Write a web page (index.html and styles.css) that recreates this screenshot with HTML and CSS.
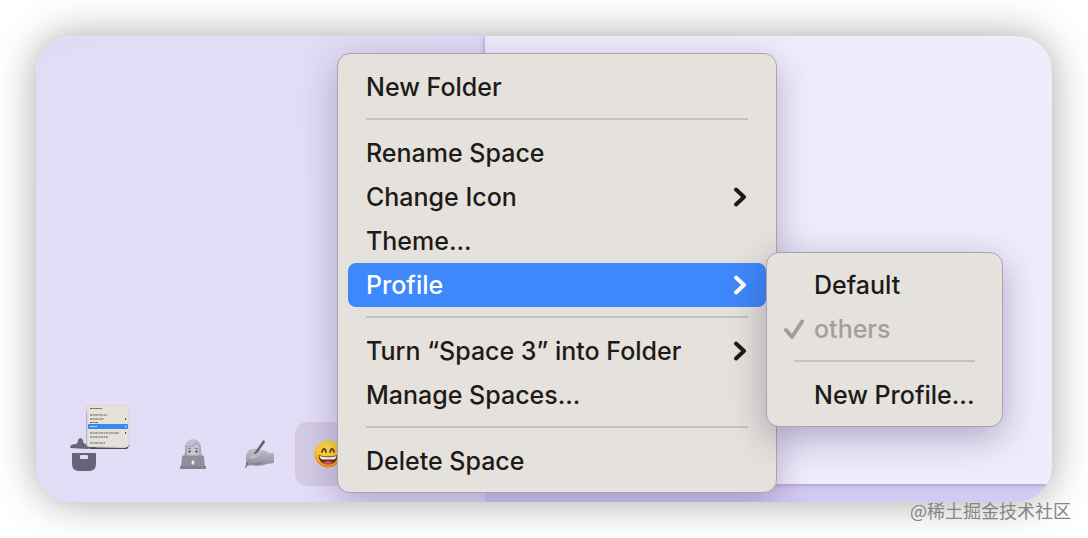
FILE: index.html
```
<!DOCTYPE html>
<html lang="en">
<head>
<meta charset="utf-8">
<title>Space menu</title>
<link rel="stylesheet" href="styles.css">
</head>
<body>
<main class="window">
  <aside class="sidebar">
    <nav class="spaces" aria-label="Spaces">
      <button class="space archive" aria-label="Archive">
        <svg width="62" height="70" viewBox="0 0 62 70">
          <path d="M1 43q0-4 6-4q2-1 2-4q2-4 5 0q0 4 3 4h10v4l-9 1z" fill="#68637a"/>
          <path d="M3 48h24v11q0 7-7 7h-10q-7 0-7-7z" fill="#68637a"/>
          <rect x="11" y="50" width="8" height="4" rx="1" fill="#e3dcf7"/>
          <path d="M20 42l36 1 5-3-3 4H22z" fill="#252b35" opacity=".8"/>
          <path d="M18 7v34" stroke="#8db8df" stroke-width="2"/>
          <rect x="18" y="0" width="42" height="42" rx="3" fill="#e5e1d8" stroke="#c6c2cc" stroke-width=".5"/>
          <rect x="19" y="19" width="40" height="5" rx="1" fill="#3c88f2"/>
          <g stroke="#4b4945" stroke-width="1.1" stroke-dasharray="2.500 .7 1.500 .5" opacity=".85">
            <path d="M21 3.500h12M21 10h17M21 14h14M21 17.500h8M21 28h29M21 32h18M21 38h15"/>
          </g>
          <path d="M21 21.500h7" stroke="#dcebff" stroke-width="1.100" stroke-dasharray="2 .6"/>
          <path d="M56 13l1.500 1-1.500 1zM56 27l1.500 1-1.500 1z" fill="#111"/>
          <path d="M56 20.500l1.500 1-1.500 1z" fill="#fff"/>
        </svg>
      </button>
      <button class="space" aria-label="Developer">
        <svg width="28" height="32" viewBox="0 0 28 32">
          <path d="M5 20q0-4 1-6-1-12 8-12.500Q23 2 22 14q1 2 1 6z" fill="#aaa6b5"/>
          <path d="M8 9q6 1 9-3l3 3v7q-1 4-6 4t-6-4z" fill="#cbc7d2"/>
          <path d="M7 8Q13 9 17 4l4 4q-1-6-7-6.500T7 8" fill="#c3bfcc"/>
          <path d="M9 11l3-1M16 10l3 1" stroke="#777280" stroke-width="1"/>
          <circle cx="10.500" cy="13.500" r="1.300" fill="#5e5968"/><circle cx="17.500" cy="13.500" r="1.300" fill="#5e5968"/>
          <path d="M3 19q0-1.500 1-1.500h20q1 0 1 1.500l1 10H2z" fill="#918d9d"/>
          <path d="M1 28h26v3H1z" fill="#858190"/>
          <path d="M14 22q3 2 0 5-3-2 0-5" fill="#ede9f4"/>
        </svg>
      </button>
      <button class="space" aria-label="Writing">
        <svg width="30" height="32" viewBox="0 0 30 32">
          <defs><linearGradient id="hand" x1="0" y1="0" x2="0" y2="1"><stop stop-color="#c4c1cd"/><stop offset="1" stop-color="#918d9b"/></linearGradient></defs>
          <path d="M2 23q-1-10 5-12 5-1 10 1 5 0 8 3h5v10l-7 1q-7 3-14 1l-6 1q-2-2-1-5" fill="url(#hand)"/>
          <path d="M6 25q5 2 12-1M8 27q5 0 11-2" stroke="#858190" fill="none"/>
          <path d="M1 30l2-5L18 4q1-3 3-1 0 2-2 4L11 18l-5 2-4 10z" fill="#66616f"/>
          <path d="M5 20q2-5 6-4l5-2q2 2-1 4l-6 3" fill="#bdb9c7"/>
        </svg>
      </button>
      <button class="space current" aria-label="Space 3">
        <svg width="28" height="28" viewBox="0 0 28 28">
          <defs><radialGradient id="face" cx=".5" cy=".35" r=".65"><stop stop-color="#ffe84b"/><stop offset=".65" stop-color="#ffc72c"/><stop offset="1" stop-color="#ee8914"/></radialGradient></defs>
          <circle cx="14" cy="14" r="13.500" fill="url(#face)"/>
          <path d="M8 12q1-4 2.500-3t1.500 3M16 12q1-4 2.500-3t1.500 3" stroke="#63380c" stroke-width="1.700" fill="none" stroke-linecap="round"/>
          <path d="M4.500 15q9.500 3 19 0 0 9-9.500 9.500Q5 24 4.500 15" fill="#70300e"/>
          <path d="M5.500 16q8.500 2.500 17 0-.5 3-2 3.500H8q-2-.5-2.500-3.500" fill="#fff"/>
          <path d="M9 22.500q5-3 10 0-5 3-10 0" fill="#ee5364"/>
        </svg>
      </button>
    </nav>
  </aside>
  <section class="page" aria-label="Page"></section>

  <ul class="menu main-menu">
    <li><button class="item">New Folder</button></li>
    <li class="separator"></li>
    <li><button class="item">Rename Space</button></li>
    <li><button class="item">Change Icon<svg class="chevron" width="14" height="20" viewBox="0 0 14 20"><path d="M3 2.500l8 7.500-8 7.500"/></svg></button></li>
    <li><button class="item">Theme...</button></li>
    <li class="parent">
      <button class="item selected" aria-expanded="true">Profile<svg class="chevron" width="14" height="20" viewBox="0 0 14 20"><path d="M3 2.500l8 7.500-8 7.500"/></svg></button>
      <ul class="menu submenu">
        <li><button class="item">Default</button></li>
        <li><button class="item" disabled><svg class="check" width="20" height="20" viewBox="0 0 20 20"><path d="M2 11l6 7L18 2.500"/></svg>others</button></li>
        <li class="separator"></li>
        <li><button class="item">New Profile...</button></li>
      </ul>
    </li>
    <li class="separator"></li>
    <li><button class="item">Turn “Space 3” into Folder<svg class="chevron" width="14" height="20" viewBox="0 0 14 20"><path d="M3 2.500l8 7.500-8 7.500"/></svg></button></li>
    <li><button class="item">Manage Spaces...</button></li>
    <li class="separator"></li>
    <li><button class="item">Delete Space</button></li>
  </ul>
</main>
<p class="watermark">@稀土掘金技术社区</p>
</body>
</html>
```
FILE: styles.css
```
* { box-sizing: border-box; }

body {
  position: relative;
  display: flex;
  min-height: 100vh;
  margin: 0;
  padding: 36px;
  background: #fff;
  font-family: Inter, "Liberation Sans", sans-serif;
}

.window {
  position: relative;
  display: flex;
  flex: 1;
  overflow: hidden;
  border-radius: 36px;
  background: linear-gradient(#e1dcf6, #d3caf1);
  box-shadow: 0 0 40px rgba(0, 0, 0, .35);
}

.sidebar {
  display: flex;
  flex: 0 0 449px;
  align-items: flex-end;
  padding: 0 0 16px 33px;
  background: linear-gradient(160deg, #e1dcf5, #e4ddf8);
}

.page {
  flex: 1;
  margin-bottom: 18px;
  background: #f0ecfc;
  box-shadow: 0 0 6px rgba(60, 40, 110, .4);
}

.spaces { display: flex; align-items: center; }

.space {
  display: flex;
  align-items: center;
  justify-content: center;
  width: 66px;
  height: 64px;
  padding: 0;
  border: 0;
  border-radius: 12px;
  background: none;
}

.space svg { flex: none; }
.archive { width: 91px; justify-content: flex-start; align-items: flex-end; padding-bottom: 11px; }
.current { margin-left: 3px; background: #d2cbe3; }

.menu {
  position: absolute;
  margin: 0;
  padding: 10px 9px 9px;
  border: 1px solid #a9a5b0;
  border-radius: 13px;
  background: #e5e1dc;
  list-style: none;
}

.main-menu {
  top: 17px;
  left: 301px;
  width: 440px;
  padding: 11px 10px 9px;
  box-shadow: 0 10px 36px rgba(45, 30, 90, .3);
}

.parent { position: relative; }

.submenu {
  top: -11px;
  left: 100%;
  width: 237px;
  box-shadow: 0 10px 36px rgba(45, 35, 80, .35);
}

.item {
  display: flex;
  align-items: center;
  width: 100%;
  height: 44px;
  padding: 0 19px 0 18px;
  border: 0;
  border-radius: 8px;
  background: none;
  color: #1d1b18;
  font: 450 25px/44px Inter, "Liberation Sans", sans-serif;
  text-align: left;
  white-space: nowrap;
}

.item.selected { background: #3d88fb; color: #fff; }
.item:disabled { color: #a29e9a; }
.submenu .item { position: relative; padding: 0 0 0 38px; }

.chevron, .check {
  fill: none;
  stroke: currentColor;
  stroke-width: 3;
  stroke-linecap: round;
  stroke-linejoin: round;
}

.chevron { margin-left: auto; stroke-width: 4; }
.check { position: absolute; left: 8px; stroke-width: 4; }

.separator {
  height: 22px;
  margin: 0 18px;
  padding-top: 9px;
}

.separator::before {
  content: "";
  display: block;
  height: 2px;
  background: #c5c1bd;
}

.watermark {
  position: absolute;
  right: 17px;
  bottom: 16px;
  margin: 0;
  color: #858585;
  font: 400 18px/24px "Noto Sans CJK SC", sans-serif;
}
```
